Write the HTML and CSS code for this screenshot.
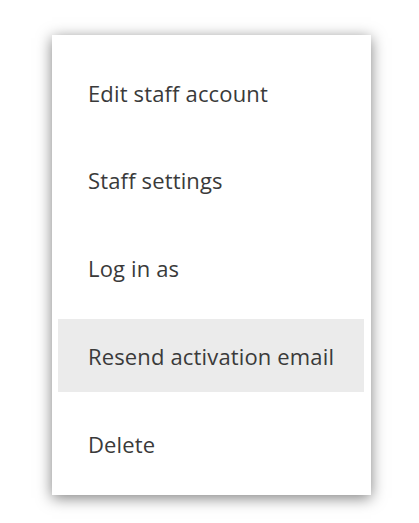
FILE: index.html
```html
<!DOCTYPE html>
<html>
<head>
<meta charset="utf-8">
<link rel="stylesheet" href="styles.css">
</head>
<body>
<div class="menu">
  <div class="item">Edit staff account</div>
  <div class="item">Staff settings</div>
  <div class="item">Log in as</div>
  <div class="item active">Resend activation email</div>
  <div class="item">Delete</div>
</div>
</body>
</html>
```
FILE: styles.css
```css
html, body {
  margin: 0;
  padding: 0;
  background: #ffffff;
}
body {
  min-height: 523px;
  box-sizing: border-box;
  padding: 35px 0 0 52px;
  font-family: "Open Sans", "Noto Sans", sans-serif;
}
.menu {
  width: 319px;
  box-sizing: border-box;
  padding: 21px 7px 15px 6px;
  background: #ffffff;
  box-shadow: 0 3px 14px rgba(0, 0, 0, 0.5);
  display: flex;
  flex-direction: column;
  gap: 14.75px;
}
.item {
  height: 73px;
  display: flex;
  align-items: center;
  padding-left: 30px;
  font-size: 22px;
  letter-spacing: 0.15px;
  color: #3a3a3a;
}
.item.active {
  background: #ebebeb;
}
```
